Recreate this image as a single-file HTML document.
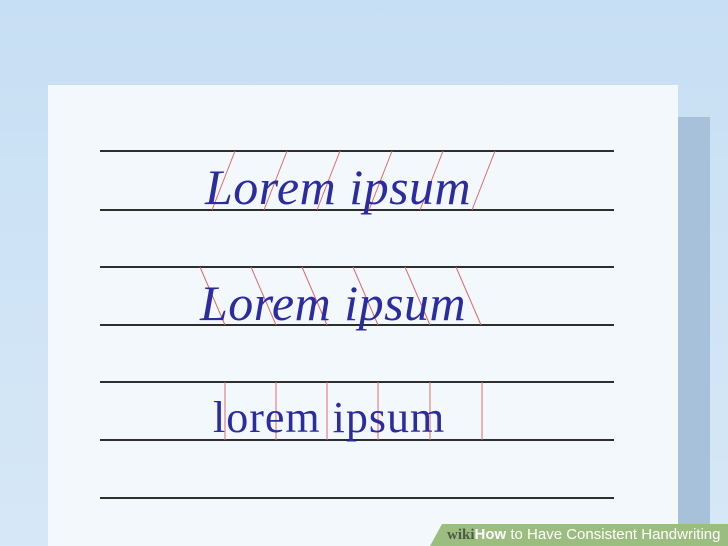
<!DOCTYPE html>
<html><head><style>
body{margin:0;width:728px;height:546px;overflow:hidden;background:linear-gradient(#c7dff4,#d6e8f7);position:relative;font-family:"Liberation Sans",sans-serif}
.shadow{position:absolute;left:678px;top:117px;width:32px;height:429px;background:#a7c1da}
.paper{position:absolute;left:48px;top:85px;width:630px;height:461px;background:#f3f8fd}
.hw{position:absolute;font-family:"Liberation Serif",serif;color:#2c2c9e;font-size:50px;white-space:nowrap;letter-spacing:0px}
.wm{position:absolute;left:430px;top:524px;width:298px;height:22px;background:#9bbd7f;clip-path:polygon(12px 0,100% 0,100% 100%,0 100%)}
.wm span{position:absolute;left:17px;top:2px;font-size:15px;color:#fff;font-weight:bold;white-space:nowrap}
</style></head><body>
<div class="shadow"></div>
<div class="paper"></div>
<svg style="position:absolute;left:0;top:0" width="728" height="546">
<g stroke="#111" stroke-width="1.8">
<line x1="100" y1="151" x2="614" y2="151"/><line x1="100" y1="210" x2="614" y2="210"/>
<line x1="100" y1="267" x2="614" y2="267"/><line x1="100" y1="325" x2="614" y2="325"/>
<line x1="100" y1="382" x2="614" y2="382"/><line x1="100" y1="440" x2="614" y2="440"/>
<line x1="100" y1="498" x2="614" y2="498"/></g>
<g stroke="#e06a6a" stroke-width="1">
<line x1="235" y1="151" x2="212" y2="210"/><line x1="287" y1="151" x2="264" y2="210"/><line x1="340" y1="151" x2="317" y2="210"/><line x1="392" y1="151" x2="369" y2="210"/><line x1="443" y1="151" x2="420" y2="210"/><line x1="495" y1="151" x2="472" y2="210"/>
<line x1="200" y1="267" x2="225" y2="325"/><line x1="251" y1="267" x2="276" y2="325"/><line x1="302" y1="267" x2="327" y2="325"/><line x1="353" y1="267" x2="378" y2="325"/><line x1="405" y1="267" x2="430" y2="325"/><line x1="456" y1="267" x2="481" y2="325"/>
<line x1="225" y1="382" x2="225" y2="440"/><line x1="276" y1="382" x2="276" y2="440"/><line x1="327" y1="382" x2="327" y2="440"/><line x1="378" y1="382" x2="378" y2="440"/><line x1="430" y1="382" x2="430" y2="440"/><line x1="482" y1="382" x2="482" y2="440"/>
</g></svg>
<div class="hw" style="left:205px;top:158px;font-style:italic;letter-spacing:0.5px">Lorem ipsum</div>
<div class="hw" style="left:200px;top:274px;font-style:italic;letter-spacing:0.5px">Lorem ipsum</div>
<div class="hw" style="left:213px;top:392px;font-size:44px;letter-spacing:1px">lorem ipsum</div>
<div class="wm"><span><span style="position:static;color:#4e5a45;font-family:'Liberation Serif',serif">wiki</span><span style="position:static">How</span> <span style="position:static;font-weight:normal">to Have Consistent Handwriting</span></span></div>
</body></html>
